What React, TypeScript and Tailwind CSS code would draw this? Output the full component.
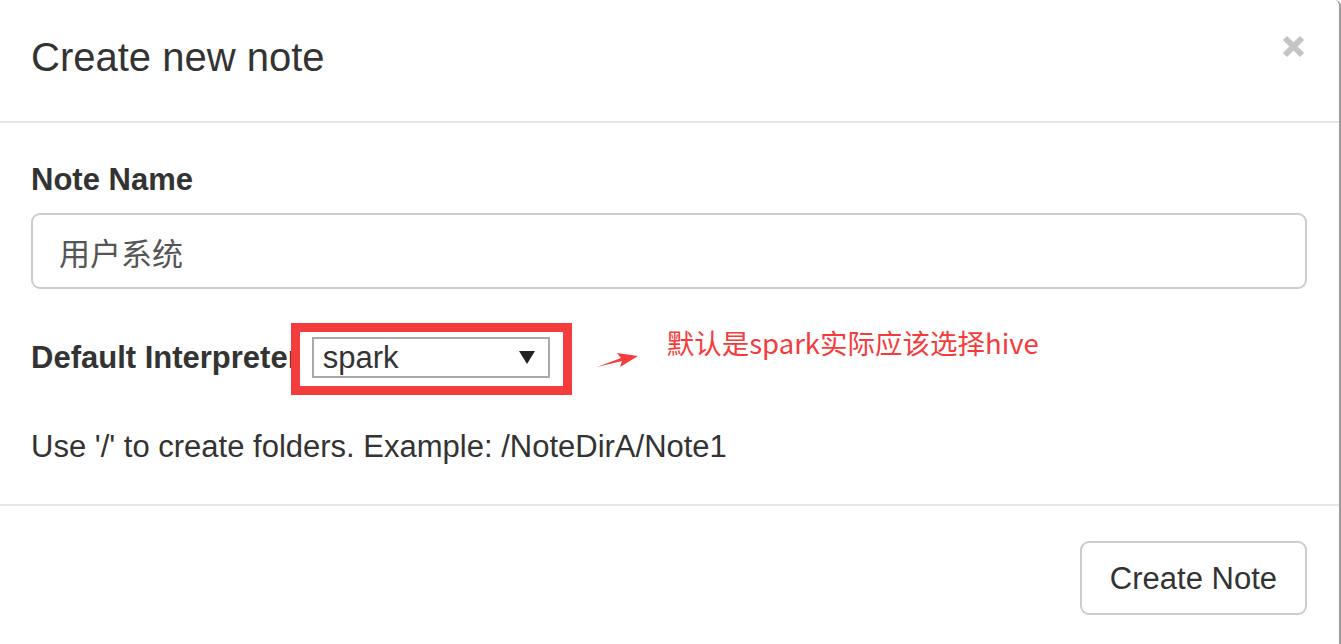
import React from 'react';

const App: React.FC = () => {
  return (
    <div className="w-[1341px] h-[644px] overflow-hidden bg-white font-['Liberation_Sans',Arial,sans-serif] text-[#333]">
      <div className="h-full border-r-2 border-[#9a9a9a] rounded-tr-[6px]">
        {/* Header */}
        <div className="h-[123px] border-b-2 border-[#e5e5e5] pl-[31px] pr-[34px] flex items-start justify-between">
          <h4 className="mt-[34px] text-[40px] leading-[46px] text-[#333]">Create new note</h4>
          <button className="mt-[35px] w-[23px] h-[23px] flex items-center justify-center cursor-pointer">
            <svg width="23" height="23" viewBox="0 0 23 23">
              <path d="M3 3 L20 20 M20 3 L3 20" stroke="#c4c4c4" strokeWidth="6" strokeLinecap="butt" />
            </svg>
          </button>
        </div>

        {/* Body */}
        <div className="pl-[31px] pr-[32px] pt-[39px] pb-[39px] border-b-2 border-[#e5e5e5]">
          <label className="block text-[31px] leading-[36px] font-bold text-[#333]">Note Name</label>
          <div className="mt-[15px] h-[76px] border-2 border-[#cccccc] rounded-[9px] flex items-center px-[26px]">
            <span className="text-[31px] text-[#555] font-['Noto_Sans_CJK_SC',sans-serif] leading-none">用户系统</span>
          </div>

          <div className="mt-[48px] h-[41px] flex items-center relative">
            <span className="text-[31px] leading-[36px] font-bold text-[#333]">Default Interpreter</span>
            <div className="relative ml-[12px] w-[238px] h-[41px]">
              <div className="w-full h-full border-2 border-[#a9a9a9] bg-white flex items-center justify-between pl-[9px] pr-[13px]">
                <span className="text-[31px] leading-none text-[#333]">spark</span>
                <svg width="16" height="13" viewBox="0 0 16 13">
                  <path d="M0 0 H16 L8 13 Z" fill="#222" />
                </svg>
              </div>
              {/* annotation box */}
              <div className="absolute left-[-21px] top-[-14px] w-[281px] h-[72px] border-[9px] border-[#f53c3c]" />
            </div>
            {/* annotation arrow */}
            <svg className="ml-[47px] mt-[6px]" width="42" height="16" viewBox="0 0 42 16">
              <path d="M0 14 L25 8 L23 14 L41 3 L20 0 L24 5 Z" fill="#f53c3c" />
            </svg>
            <span className="ml-[28px] -mt-[30px] text-[27.5px] leading-none text-[#f53c3c] font-['Noto_Sans_CJK_SC',sans-serif]">
              默认是spark实际应该选择hive
            </span>
          </div>

          <p className="mt-[51px] text-[31px] leading-[36px] text-[#333]">
            Use '/' to create folders. Example: /NoteDirA/Note1
          </p>
        </div>

        {/* Footer */}
        <div className="pl-[31px] pr-[32px] pt-[35px] flex justify-end">
          <button className="h-[74px] px-[28px] border-2 border-[#cccccc] rounded-[9px] bg-white text-[31px] text-[#333] leading-none cursor-pointer">
            Create Note
          </button>
        </div>
      </div>
    </div>
  );
};

export default App;
